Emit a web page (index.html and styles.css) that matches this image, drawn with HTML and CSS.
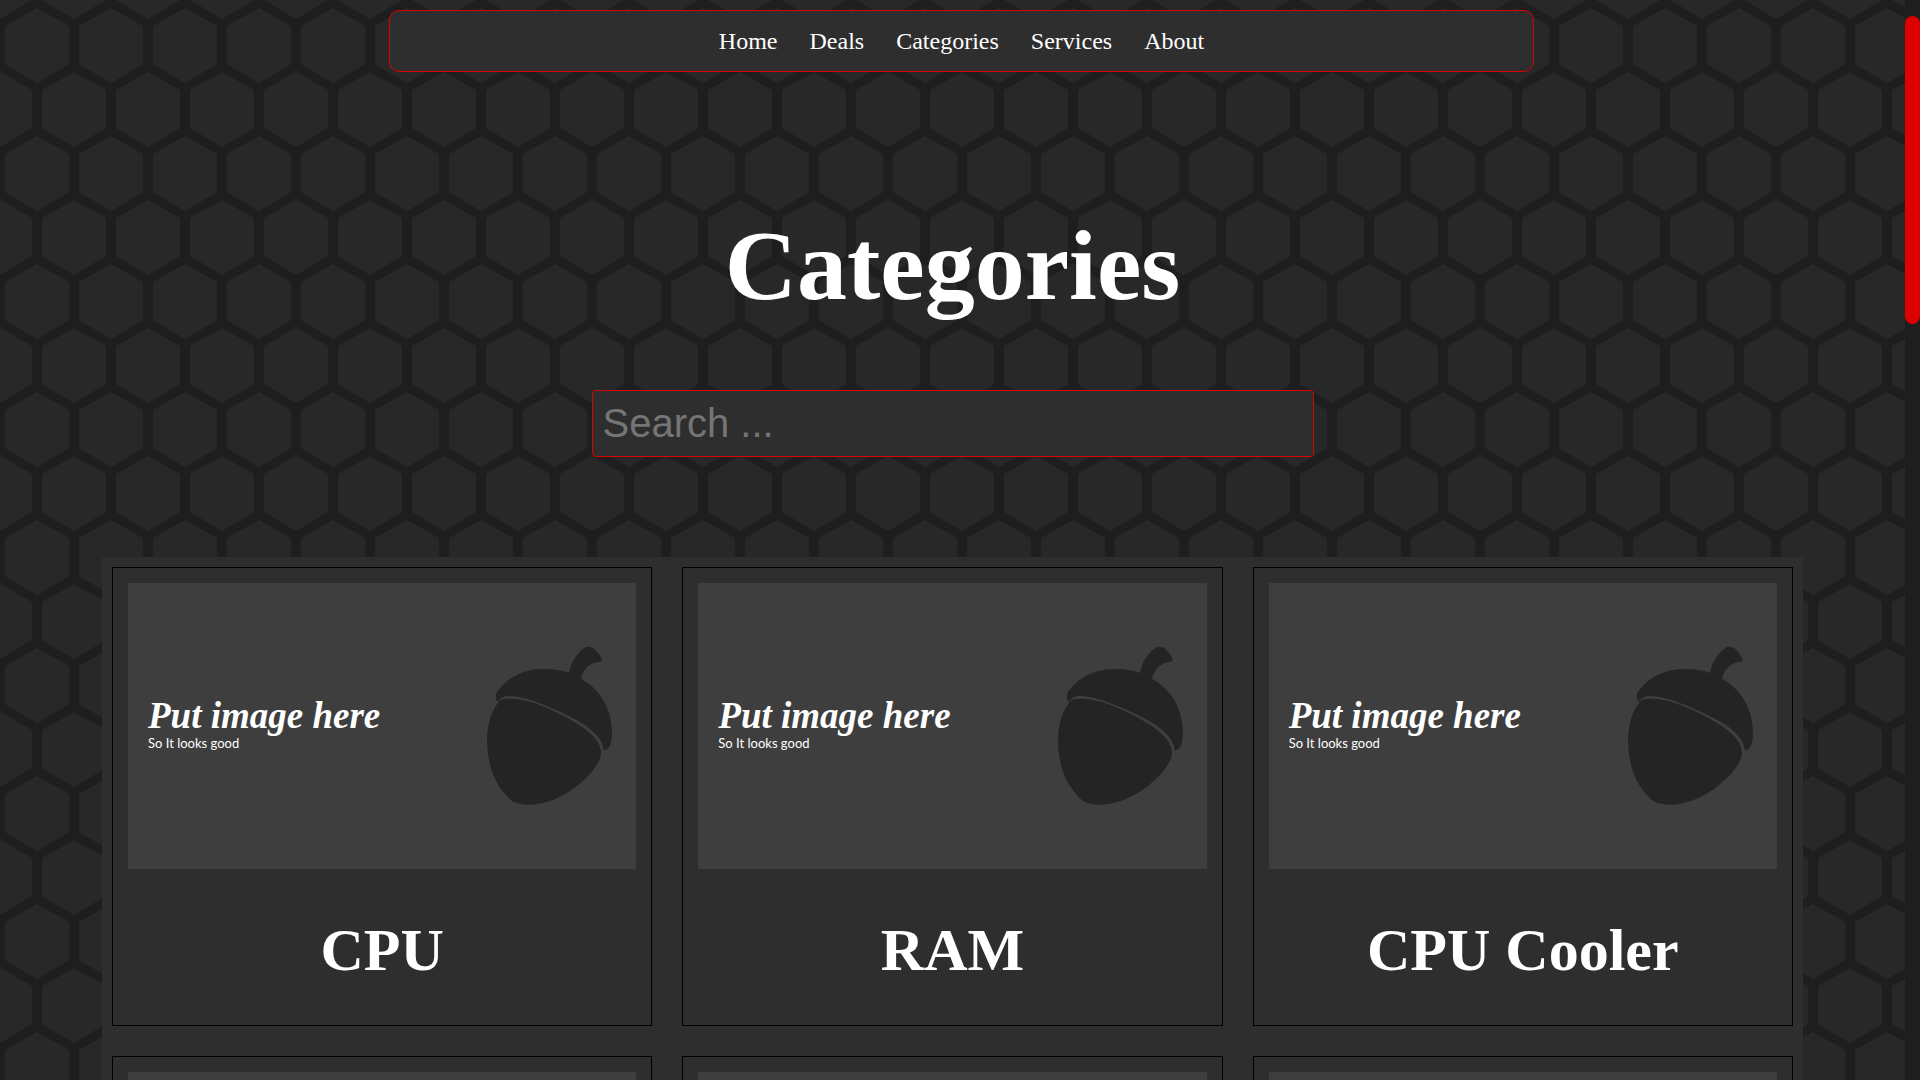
FILE: index.html
```html
<!DOCTYPE html>
<html lang="en">
<head>
<meta charset="utf-8">
<title>Categories</title>
<link rel="stylesheet" href="styles.css">
</head>
<body>
<svg class="sprite" aria-hidden="true">
  <symbol id="acorn" viewBox="48 48 381 477">
    <path d="M84 216C77 210 76 201 79 189C102 154 148 117 222 117C252 117 276 120 297 129C302 99 322 65 347 52Q355 48 365 52C379 60 391 76 396 91Q394 96 384 96C352 100 339 124 333 146C393 180 427 238 426 315C424 344 417 360 401 361C399 333 378 310 350 289C310 263 262 241 217 223C172 205 120 191 98 202Q89 207 84 216Z"/>
    <path d="M89 213C96 205 111 206 127 206C153 207 188 216 217 228C269 250 307 270 341 294C371 316 401 347 391 383C378 419 341 453 309 477C268 505 222 525 174 524Q142 523 127 514C83 476 52 421 51 328C52 284 64 240 89 213Z"/>
  </symbol>
</svg>
<div class="page">
  <nav class="navbar">
    <a href="#">Home</a>
    <a href="#">Deals</a>
    <a href="#">Categories</a>
    <a href="#">Services</a>
    <a href="#">About</a>
  </nav>
  <main>
    <h1>Categories</h1>
    <input class="search" type="search" placeholder="Search ..." aria-label="Search">
    <section class="grid">
      <article class="card">
        <div class="thumb"><div><p class="title">Put image here</p><p class="sub">So It looks good</p></div><svg class="acorn"><use href="#acorn"/></svg></div>
        <h2>CPU</h2>
      </article>
      <article class="card">
        <div class="thumb"><div><p class="title">Put image here</p><p class="sub">So It looks good</p></div><svg class="acorn"><use href="#acorn"/></svg></div>
        <h2>RAM</h2>
      </article>
      <article class="card">
        <div class="thumb"><div><p class="title">Put image here</p><p class="sub">So It looks good</p></div><svg class="acorn"><use href="#acorn"/></svg></div>
        <h2>CPU Cooler</h2>
      </article>
      <article class="card">
        <div class="thumb"><div><p class="title">Put image here</p><p class="sub">So It looks good</p></div><svg class="acorn"><use href="#acorn"/></svg></div>
        <h2>GPU</h2>
      </article>
      <article class="card">
        <div class="thumb"><div><p class="title">Put image here</p><p class="sub">So It looks good</p></div><svg class="acorn"><use href="#acorn"/></svg></div>
        <h2>Storage</h2>
      </article>
      <article class="card">
        <div class="thumb"><div><p class="title">Put image here</p><p class="sub">So It looks good</p></div><svg class="acorn"><use href="#acorn"/></svg></div>
        <h2>Case</h2>
      </article>
    </section>
  </main>
</div>
<div class="scrollbar" aria-hidden="true"><div class="scrollbar-thumb"></div></div>
</body>
</html>
```
FILE: styles.css
```css
* { box-sizing: border-box; }
html {
  scrollbar-width: none;
  background: #282828 url("data:image/svg+xml,%3Csvg xmlns='http://www.w3.org/2000/svg' width='74' height='128'%3E%3Crect width='74' height='128' fill='%231e1e1e'/%3E%3Cpath fill='%23282828' d='M37 8L69 26V64L37 83L5 64V26ZM0 72L32 90V128H-32V90ZM74 72L106 90V128H42V90ZM-32 0H32L0 19ZM42 0H106L74 19Z'/%3E%3C/svg%3E");
}
body {
  margin: 0;
  color: #fff;
  font-family: "Liberation Serif", "Times New Roman", serif;
}
.page {
  margin-right: 15px;
  padding: 10px 0;
}
.scrollbar {
  position: fixed;
  top: 0;
  right: 0;
  bottom: 0;
  width: 15px;
  padding: 16px 0;
  background: #1e1e1e;
}
.scrollbar-thumb {
  height: 308px;
  background: #d00;
  border-radius: 8px;
}
.sprite { display: none; }
.navbar {
  position: sticky;
  top: 10px;
  z-index: 1;
  box-sizing: content-box;
  display: flex;
  justify-content: center;
  gap: 32px;
  width: 60%;
  margin-left: calc(20% + 8px);
  padding: 16px 0;
  background: #2e2e2e;
  border: 1px solid #d00;
  border-radius: 10px;
  font-size: 24px;
  line-height: 28px;
}
.navbar a { color: #fff; text-decoration: none; }
main {
  display: flex;
  flex-direction: column;
  align-items: center;
  padding-top: 136px;
}
h1 { margin: 0 0 67px; font-size: 100px; line-height: 115px; }
.search {
  width: 722px;
  max-width: 90%;
  height: 67px;
  margin: 0 0 100px;
  padding: 10px;
  background: #2e2e2e;
  border: 1px solid #d00;
  border-radius: 4px;
  color: #fff;
  font-family: "Liberation Sans", Arial, sans-serif;
  font-size: 40px;
  line-height: 45px;
  appearance: none;
}
.search::placeholder { color: #757575; }
.grid {
  display: grid;
  grid-template-columns: repeat(3, 1fr);
  gap: 30px;
  width: calc(100% - 204px);
  padding: 10px;
  background: #2e2e2e;
}
.card { padding: 15px; border: 1px solid #000; }
.thumb {
  display: flex;
  align-items: center;
  justify-content: space-between;
  aspect-ratio: 16 / 9;
  padding: 0 23px 0 20px;
  background: #3e3e3e;
}
.title {
  margin: 0 0 2px;
  font: italic bold 37px/32px "Liberation Serif", serif;
}
.sub {
  margin: 0;
  font: 13px/18px Lato, sans-serif;
}
.acorn { width: 127px; height: 159px; fill: #242424; }
h2 {
  margin: 47px 0 25px;
  font-size: 60px;
  line-height: 69px;
  text-align: center;
}
```
